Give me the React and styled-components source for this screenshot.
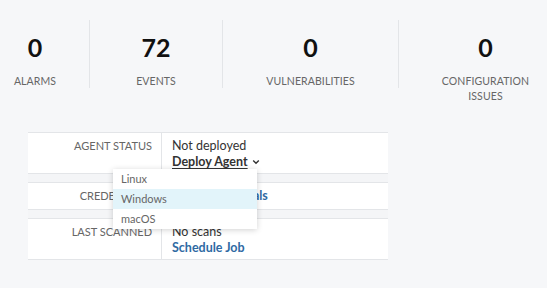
import React from "react";
import styled, { createGlobalStyle } from "styled-components";

const Global = createGlobalStyle`
  html, body { margin: 0; padding: 0; }
  body {
    background: #f6f7f9;
    font-family: Lato, "Noto Sans", sans-serif;
    color: #333;
    overflow: hidden;
    width: 547px;
    height: 288px;
  }
`;

const Page = styled.div`
  width: 547px;
  height: 288px;
  overflow: hidden;
`;

const Stats = styled.div`
  display: flex;
  margin-top: 20px;
  width: 700px;
`;

const Stat = styled.div`
  flex: 0 0 ${(p) => p.$w}px;
  box-sizing: border-box;
  height: 68px;
  padding-top: 12px;
  padding-right: ${(p) => p.$pr || 0}px;
  border-left: ${(p) => (p.$first ? "none" : "1px solid #e3e5e8")};
  display: flex;
  flex-direction: column;
  align-items: center;
`;

const Value = styled.div`
  font-size: 25px;
  line-height: 30px;
  font-weight: 700;
  color: #111;
`;

const Label = styled.div`
  margin-top: 12px;
  font-size: 10.5px;
  line-height: 15px;
  color: #666;
  text-transform: uppercase;
  text-align: center;
  letter-spacing: 0.1px;
`;

const Table = styled.div`
  position: relative;
  margin: 44px 0 0 28px;
  width: 360px;
  background: #fff;
  border-top: 1px solid #e3e5e8;
  border-bottom: 1px solid #e3e5e8;
`;

const Row = styled.div`
  display: grid;
  grid-template-columns: 134px 1fr;
  min-height: ${(p) => p.$h}px;
  box-sizing: border-box;
`;

const Key = styled.div`
  border-right: 1px solid #e3e5e8;
  text-align: right;
  padding: ${(p) => p.$pt}px 9px 0 0;
  font-size: 11px;
  line-height: 16px;
  color: #666;
  text-transform: uppercase;
`;

const Cell = styled.div`
  padding: ${(p) => p.$pt}px 0 0 10px;
  font-size: 12.5px;
  line-height: 16px;
  color: #333;
`;

const Spacer = styled.div`
  height: 8px;
  background: #f4f5f7;
  border-top: 1px solid #e3e5e8;
  border-bottom: 1px solid #e3e5e8;
`;

const Action = styled.a`
  display: inline-block;
  color: #2f6aa3;
  font-weight: 700;
  text-decoration: none;
  cursor: pointer;
`;

const DeployLink = styled.a`
  display: inline-flex;
  align-items: center;
  gap: 4px;
  color: #333;
  font-weight: 700;
  cursor: pointer;
`;

const Underlined = styled.span`
  text-decoration: underline;
  text-underline-offset: 2px;
`;

const Menu = styled.div`
  position: absolute;
  left: 85px;
  top: 36px;
  width: 144px;
  background: #fff;
  box-shadow: 0 1px 6px rgba(0, 0, 0, 0.18);
  z-index: 2;
`;

const MenuItem = styled.div`
  height: 20px;
  line-height: 20px;
  padding-left: 8px;
  font-size: 11px;
  color: #666;
  background: ${(p) => (p.$active ? "#e2f4fa" : "transparent")};
`;

const stats = [
  { v: "0", l: "Alarms", w: 89, pr: 19, first: true },
  { v: "72", l: "Events", w: 133 },
  { v: "0", l: "Vulnerabilities", w: 176 },
  { v: "0", l: ["Configuration", "Issues"], w: 174 },
];

export default function App() {
  return (
    <Page>
      <Global />
      <Stats>
        {stats.map((s, i) => (
          <Stat key={i} $w={s.w} $pr={s.pr} $first={s.first}>
            <Value>{s.v}</Value>
            <Label>
              {Array.isArray(s.l)
                ? s.l.map((t, j) => <div key={j}>{t}</div>)
                : s.l}
            </Label>
          </Stat>
        ))}
      </Stats>
      <Table>
        <Row $h={40}>
          <Key $pt={5}>Agent Status</Key>
          <Cell $pt={5}>
            <div>Not deployed</div>
            <DeployLink>
              <Underlined>Deploy Agent </Underlined>
              <svg width="8" height="6" viewBox="0 0 8 6">
                <path d="M1.2 1.5 L4 4.3 L6.8 1.5" fill="none" stroke="#333" strokeWidth="1.4" />
              </svg>
            </DeployLink>
          </Cell>
        </Row>
        <Spacer />
        <Row $h={26}>
          <Key $pt={5}>Credentials</Key>
          <Cell $pt={5}>
            <Action>Enter Credentials</Action>
          </Cell>
        </Row>
        <Spacer />
        <Row $h={40}>
          <Key $pt={5}>Last Scanned</Key>
          <Cell $pt={5}>
            <div>No scans</div>
            <Action>Schedule Job</Action>
          </Cell>
        </Row>
        <Menu>
          <MenuItem>Linux</MenuItem>
          <MenuItem $active>Windows</MenuItem>
          <MenuItem>macOS</MenuItem>
        </Menu>
      </Table>
    </Page>
  );
}
